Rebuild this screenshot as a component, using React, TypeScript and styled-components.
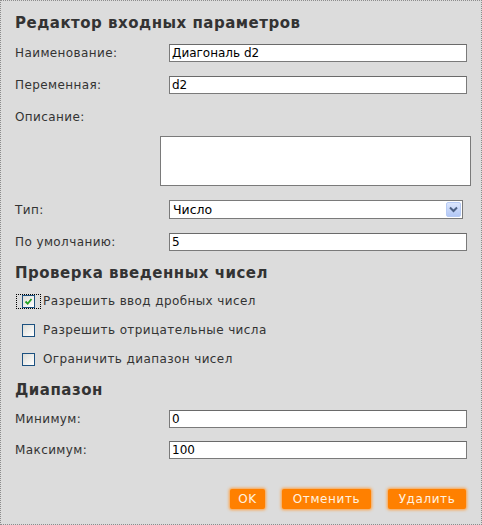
import { createGlobalStyle } from 'styled-components';
import styled from 'styled-components';

const GlobalStyle = createGlobalStyle`
  html, body {
    margin: 0;
    padding: 0;
    background: #dcdcdc;
  }
  * {
    box-sizing: border-box;
  }
`;

const Panel = styled.div`
  width: 482px;
  height: 525px;
  border: 1px dotted #8c8c8c;
  background: #dcdcdc;
  padding: 12px 14px 0 14px;
  display: flex;
  flex-direction: column;
  font-family: 'DejaVu Sans', Verdana, sans-serif;
  font-size: 12px;
  letter-spacing: 0.4px;
  color: #333;
`;

const Title = styled.h2<{ $gap?: number }>`
  margin: 0 0 ${({ $gap }) => $gap ?? 11}px 0;
  height: 20px;
  line-height: 20px;
  font-size: 15px;
  font-weight: bold;
  letter-spacing: 0.5px;
  color: #333;
`;

const Row = styled.div<{ $h?: number; $gap?: number }>`
  display: flex;
  align-items: center;
  height: ${({ $h }) => $h ?? 18}px;
  margin-bottom: ${({ $gap }) => $gap ?? 14}px;
`;

const Label = styled.label`
  width: 154px;
  flex-shrink: 0;
  color: #333;
`;

const Input = styled.input`
  width: 298px;
  height: 18px;
  margin: 0;
  padding: 0 2px;
  border: 1px solid #7a7a7a;
  border-top-color: #6a6a6a;
  background: #fff;
  font-family: 'DejaVu Sans', Verdana, sans-serif;
  font-size: 12px;
  color: #000;
  outline: none;
`;

const TextArea = styled.textarea`
  display: block;
  width: 311px;
  height: 50px;
  margin: 0 0 14px 145px;
  padding: 2px;
  border: 1px solid #7a7a7a;
  background: #fff;
  resize: none;
  outline: none;
`;

const Select = styled.div`
  position: relative;
  width: 294px;
  height: 19px;
  border: 1px solid #7a7a7a;
  background: #fff;
  padding: 0 2px 0 3px;
  line-height: 17px;
  font-family: 'DejaVu Sans', Verdana, sans-serif;
  font-size: 12.5px;
  letter-spacing: 0;
  color: #000;
`;

const SelectButton = styled.span`
  position: absolute;
  top: 1px;
  right: 1px;
  width: 15px;
  height: 15px;
  border: 1px solid #b7cbf5;
  border-radius: 2px;
  background: linear-gradient(#dbe6fd, #b3c8f6);
  display: flex;
  align-items: center;
  justify-content: center;
`;

const CheckRow = styled.label`
  display: flex;
  align-items: center;
  height: 16px;
  padding-left: 7px;
  margin-bottom: 13px;
  color: #333;
`;

const Box = styled.span<{ $focus?: boolean }>`
  position: relative;
  width: 13px;
  height: 13px;
  margin-right: 8px;
  border: 1px solid #1c5180;
  background: linear-gradient(135deg, #dcdcd7, #fff);
  display: flex;
  align-items: center;
  justify-content: center;
  &::before {
    content: '';
    display: ${({ $focus }) => ($focus ? 'block' : 'none')};
    position: absolute;
    top: -2px;
    bottom: -2px;
    left: -7px;
    right: -7px;
    border: 1px dotted #000;
  }
`;

const Footer = styled.div`
  display: flex;
  justify-content: flex-end;
  gap: 17px;
  padding-right: 1px;
  margin-top: 16px;
`;

const Button = styled.button<{ $w: number }>`
  width: ${({ $w }) => $w}px;
  height: 20px;
  padding: 0;
  border: none;
  border-radius: 2px;
  background: #ff8000;
  box-shadow: 0 0 3px 1px #ffa040;
  color: #fff2e0;
  font-family: 'DejaVu Sans', Verdana, sans-serif;
  font-size: 12px;
  letter-spacing: 0.6px;
  text-align: center;
  cursor: pointer;
`;

const Check = () => (
  <svg width="9" height="9" viewBox="0 0 9 9">
    <path d="M1.5 4.5 L3.7 6.7 L7.5 2" fill="none" stroke="#21a121" strokeWidth="1.8" />
  </svg>
);

const Chevron = () => (
  <svg width="9" height="7" viewBox="0 0 9 7">
    <path d="M1 1.5 L4.5 5 L8 1.5" fill="none" stroke="#4d6185" strokeWidth="2" />
  </svg>
);

const App = () => {
  return (
    <>
      <GlobalStyle />
      <Panel>
        <Title>Редактор входных параметров</Title>
        <Row>
          <Label>Наименование:</Label>
          <Input defaultValue="Диагональ d2" />
        </Row>
        <Row>
          <Label>Переменная:</Label>
          <Input defaultValue="d2" />
        </Row>
        <Row $gap={10}>
          <Label>Описание:</Label>
        </Row>
        <TextArea />
        <Row $h={19}>
          <Label>Тип:</Label>
          <Select>
            Число
            <SelectButton>
              <Chevron />
            </SelectButton>
          </Select>
        </Row>
        <Row $gap={12}>
          <Label>По умолчанию:</Label>
          <Input defaultValue="5" />
        </Row>
        <Title $gap={10}>Проверка введенных чисел</Title>
        <CheckRow>
          <Box $focus>
            <Check />
          </Box>
          Разрешить ввод дробных чисел
        </CheckRow>
        <CheckRow>
          <Box />
          Разрешить отрицательные числа
        </CheckRow>
        <CheckRow>
          <Box />
          Ограничить диапазон чисел
        </CheckRow>
        <Title $gap={10}>Диапазон</Title>
        <Row $gap={13}>
          <Label>Минимум:</Label>
          <Input defaultValue="0" />
        </Row>
        <Row>
          <Label>Максимум:</Label>
          <Input defaultValue="100" />
        </Row>
        <Footer>
          <Button $w={35}>OK</Button>
          <Button $w={89}>Отменить</Button>
          <Button $w={78}>Удалить</Button>
        </Footer>
      </Panel>
    </>
  );
};

export default App;
